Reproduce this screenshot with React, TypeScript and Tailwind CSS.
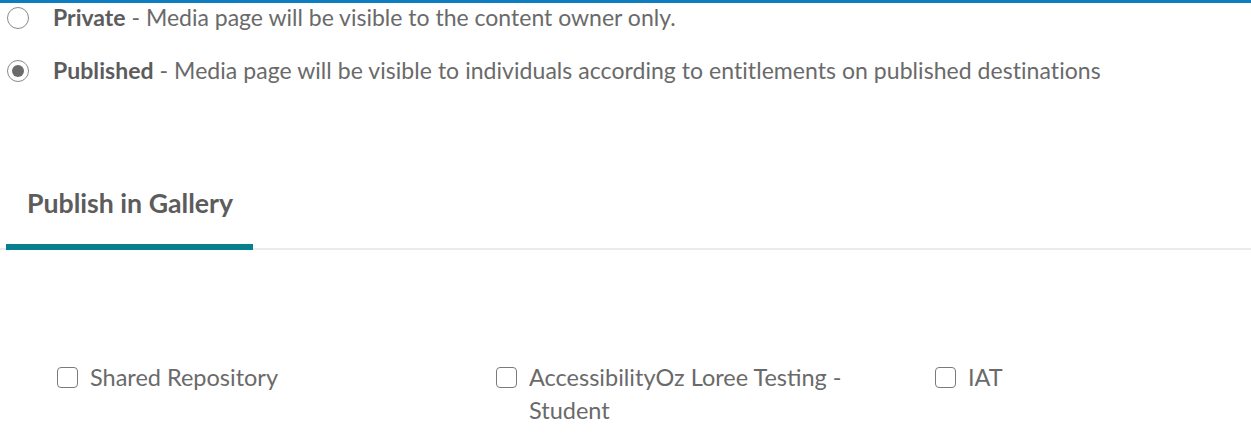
import React from 'react';

const galleries = ['Shared Repository', 'AccessibilityOz Loree Testing - Student', 'IAT'];

const Radio = ({ checked }: { checked?: boolean }) => (
  <span className="flex h-[22px] w-[22px] shrink-0 items-center justify-center rounded-full border border-[#8a8a8a] bg-white">
    {checked && <span className="h-[12px] w-[12px] rounded-full bg-[#6b6b6b]" />}
  </span>
);

const Checkbox = () => (
  <span className="mt-[6px] h-[21px] w-[21px] shrink-0 rounded-[4px] border-[1.5px] border-[#7a7a7a] bg-white" />
);

export default function App() {
  return (
    <div className="h-[434px] w-[1251px] overflow-hidden bg-white text-[#6a6a6a] font-['Lato','Liberation_Sans',sans-serif]">
      <div className="h-[3px] w-full bg-[#0b7dc0]" />

      {/* visibility options */}
      <div className="flex flex-col gap-[26px] pl-[7px] pt-[1px] text-[23px] leading-[27px]">
        <label className="flex items-center gap-[24px]">
          <Radio />
          <span>
            <b className="font-bold text-[#5c5c5c]">Private</b> - Media page will be visible to the content owner only.
          </span>
        </label>
        <label className="flex items-center gap-[24px]">
          <Radio checked />
          <span className="tracking-[0.05px]">
            <b className="font-bold text-[#5c5c5c]">Published</b> - Media page will be visible to individuals according to entitlements on published destinations
          </span>
        </label>
      </div>

      {/* tabs */}
      <div className="mt-[104px] flex border-b-2 border-[#ebebeb] pl-[6px]">
        <div className="-mb-[2px] w-[247px] border-b-[6px] border-[#06808f] pb-[25px] pl-[21px]">
          <span className="text-[26.7px] font-bold leading-[30px] text-[#5c5c5c]">Publish in Gallery</span>
        </div>
      </div>

      {/* gallery list */}
      <div className="mt-[111px] flex pl-[57px] text-[23.5px] leading-[33px]">
        {galleries.map((g) => (
          <label key={g} className="flex w-[439px] shrink-0 gap-[12px]">
            <Checkbox />
            <span className="w-[340px]">{g}</span>
          </label>
        ))}
      </div>
    </div>
  );
}
